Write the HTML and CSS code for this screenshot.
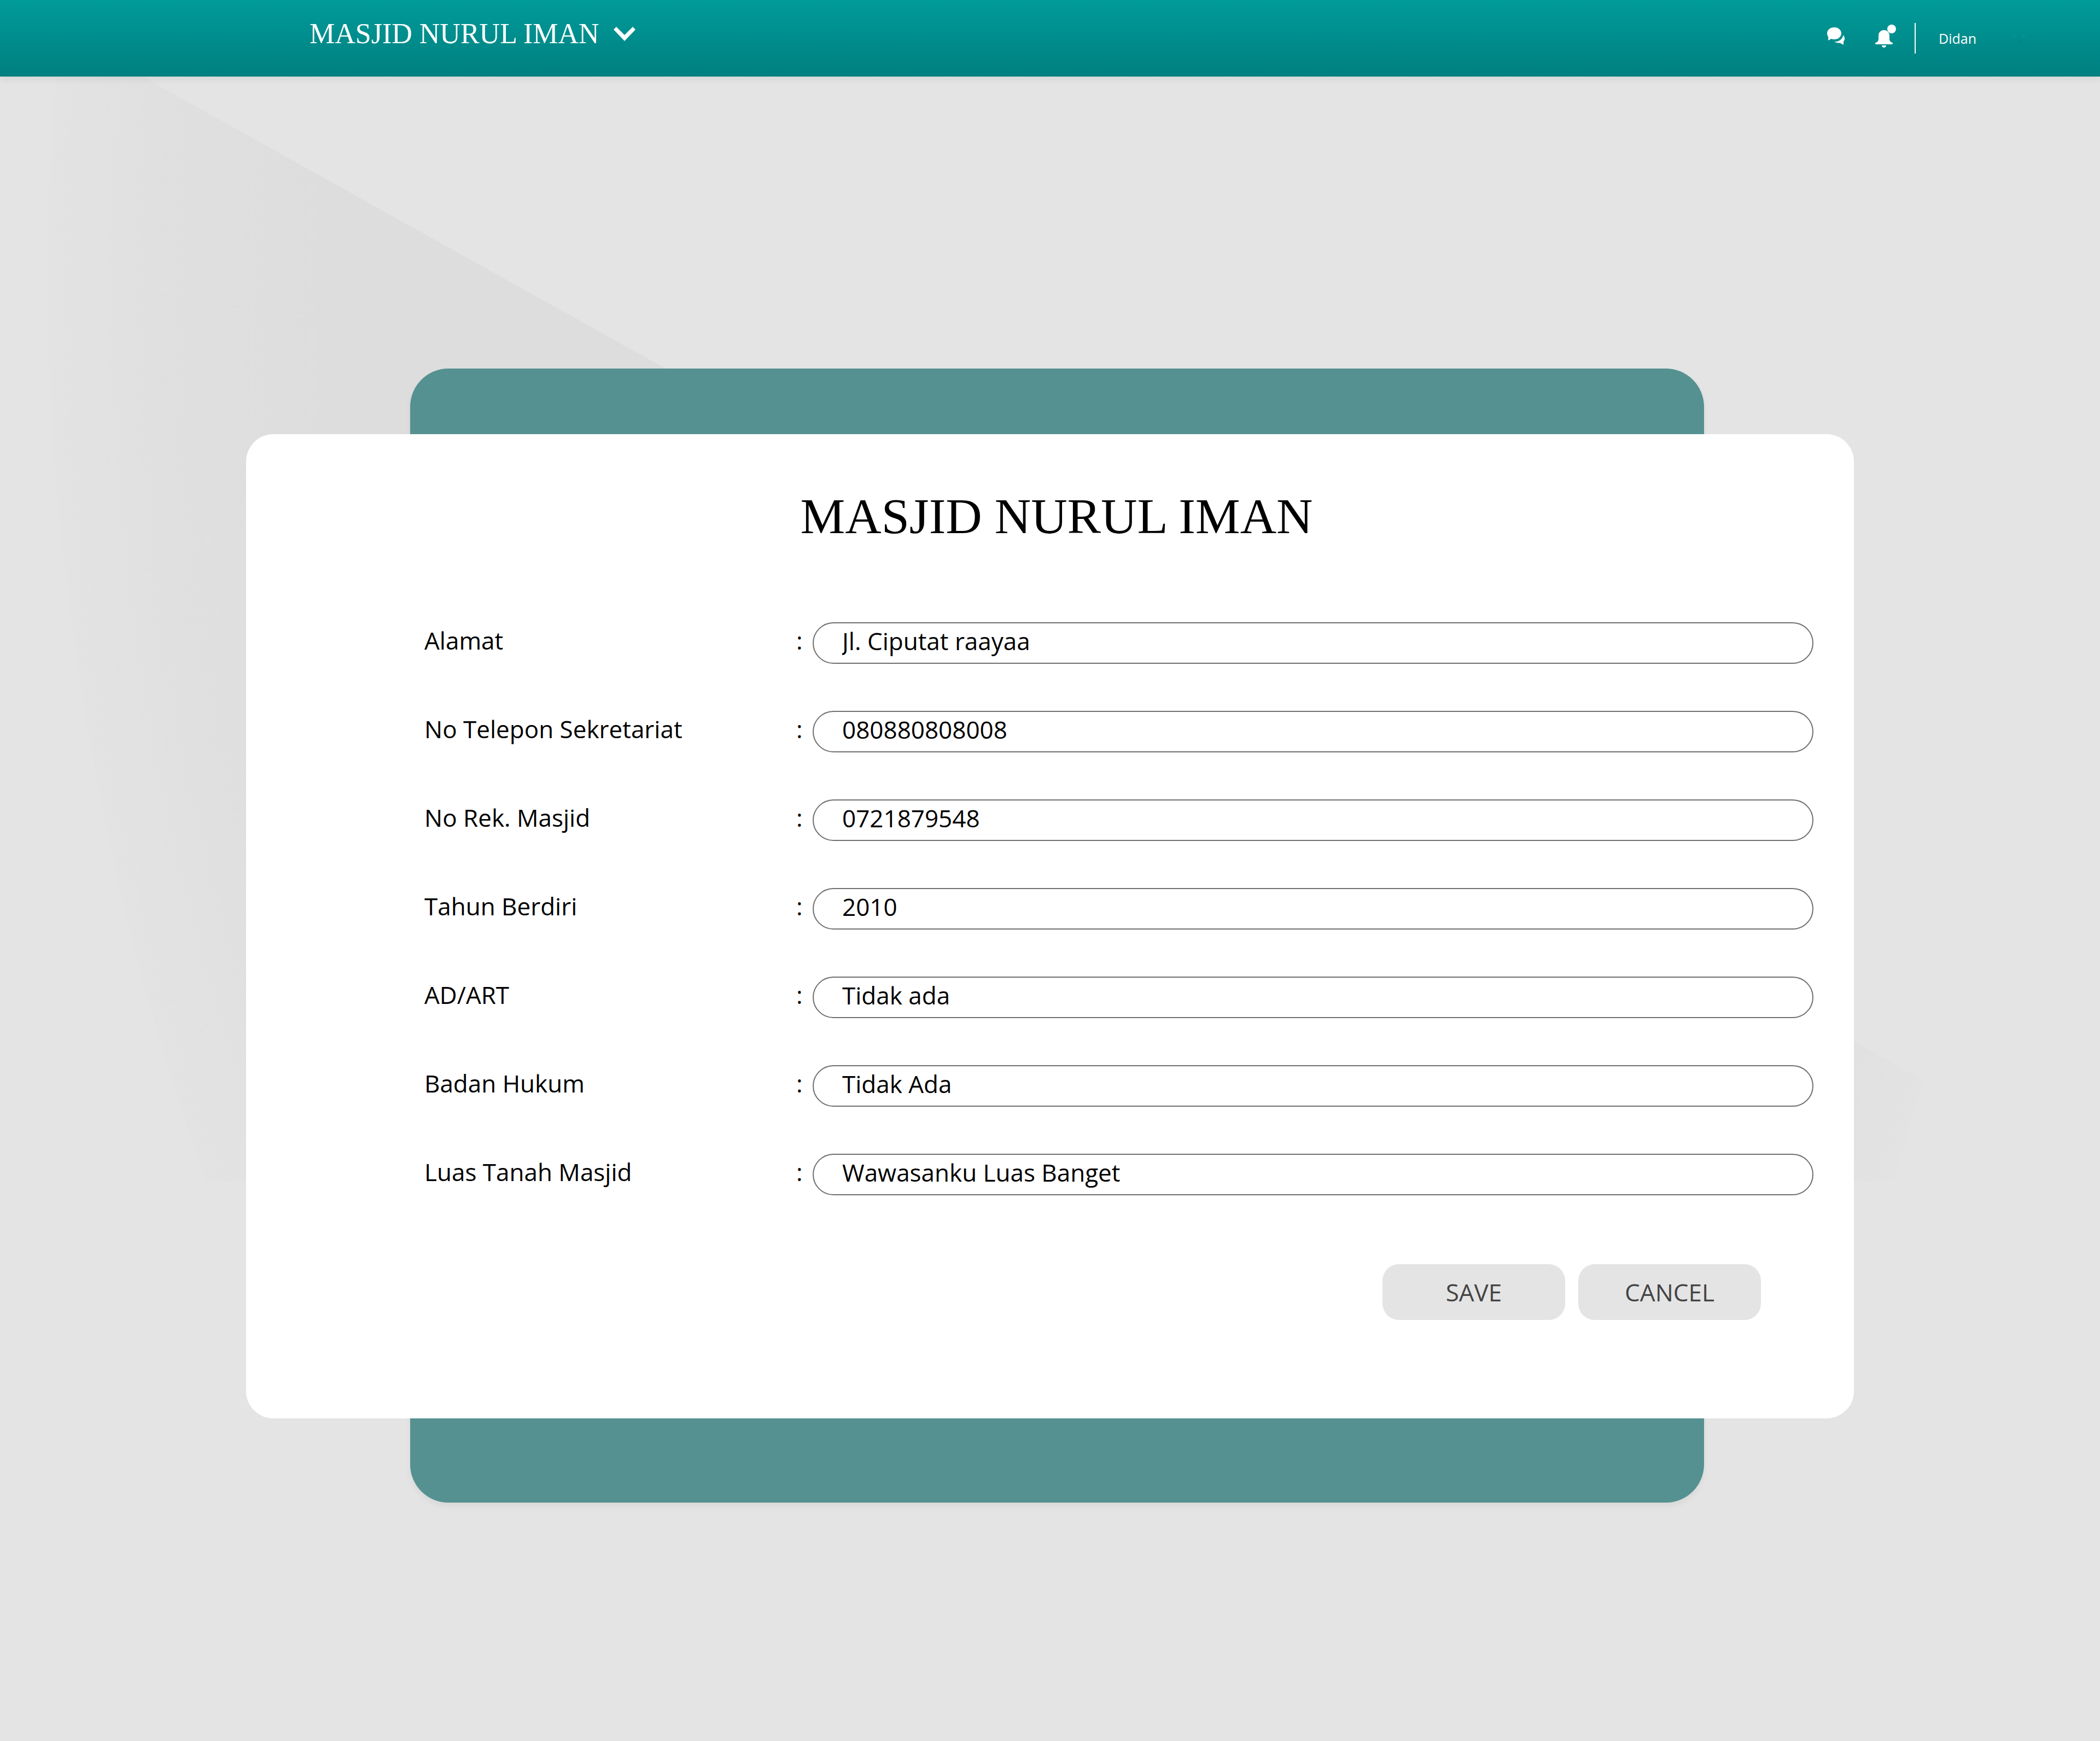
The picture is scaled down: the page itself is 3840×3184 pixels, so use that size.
FILE: index.html
```html
<!DOCTYPE html>
<html lang="id">
<head>
  <meta charset="utf-8">
  <meta name="viewport" content="width=device-width, initial-scale=1">
  <title>Masjid Nurul Iman</title>
  <link rel="stylesheet" href="styles.css">
</head>
<body>
  <svg class="backdrop-art" viewBox="0 0 3840 2160" aria-hidden="true">
    <defs>
      <radialGradient id="shade" gradientUnits="userSpaceOnUse" cx="0" cy="0" r="1" gradientTransform="translate(1918 500) scale(1831 3085)">
        <stop offset="0" stop-color="#dddddd"/>
        <stop offset="0.72" stop-color="#dddddd"/>
        <stop offset="0.9" stop-color="#e0e0e0"/>
        <stop offset="1" stop-color="#e3e3e3"/>
      </radialGradient>
    </defs>
    <path fill="url(#shade)" d="M112 57 L1215 673 L3518 1977 L3462 2160 H375 C190 1640 87 1060 87 500 C87 350 95 200 112 57Z"/>
  </svg>

  <header class="topbar">
    <button class="brand" type="button">
      <span>MASJID NURUL IMAN</span>
      <svg class="brand-chevron" viewBox="0 0 40 26" aria-hidden="true"><path d="M0 5 5 0 20 15 35 0 40 5 20 26Z"/></svg>
    </button>
    <nav class="tools" aria-label="Akun">
      <button class="tool" type="button" aria-label="Pesan">
        <svg class="chat-icon" viewBox="0 0 32 32" aria-hidden="true">
          <path d="M13 0C20.200 0 26 4.800 26 11S20.200 22 13 22C11 22 9.200 21.600 7.600 21L2 24 2.200 17.600C.8 15.800 0 13.500 0 11 0 4.800 5.800 0 13 0Z"/>
          <path d="M29.500 14C31 16 32 18 32 20.500 32 22.500 31.300 24.300 30 26V32L23.500 28.500C19.500 28.500 16 28 13 26.500 21 26.500 28.500 22 29.500 14Z"/>
        </svg>
      </button>
      <button class="tool" type="button" aria-label="Notifikasi">
        <svg class="bell-icon" viewBox="0 0 38 42" aria-hidden="true">
          <path d="M16 10C22 10 26 14.500 26 20V26C26 29 27 31 29 32 31 32.500 32 33 32 34.500S31.500 36 30 36H2C.5 36 0 35.800 0 34.500S1 32.500 3 32C5 31 6 29 6 26V20C6 14.500 10 10 16 10Z"/>
          <path d="M12 38H20C20 40.500 18 42 16 42S12 40.500 12 38Z"/>
          <circle cx="30" cy="8" r="8"/>
        </svg>
      </button>
      <a class="user" href="#">
        <span>Didan</span>
        <svg class="user-chevron" viewBox="0 0 40 26" aria-hidden="true">
          <defs>
            <linearGradient id="fade" x1="0" y1="0" x2="0" y2="1">
              <stop offset="0" stop-color="#009b98"/>
              <stop offset="1" stop-color="#00807f"/>
            </linearGradient>
          </defs>
          <path fill="url(#fade)" d="M0 5 5 0 20 15 35 0 40 5 20 26Z"/>
        </svg>
      </a>
    </nav>
  </header>

  <main class="stage">
    <div class="panel"></div>
    <form class="card">
      <h1 class="title">MASJID NURUL IMAN</h1>
      <div class="fields">
        <div class="field"><label for="alamat">Alamat</label><span>:</span><input id="alamat" type="text" value="Jl. Ciputat raayaa"></div>
        <div class="field"><label for="telepon">No Telepon Sekretariat</label><span>:</span><input id="telepon" type="text" value="080880808008"></div>
        <div class="field"><label for="rekening">No Rek. Masjid</label><span>:</span><input id="rekening" type="text" value="0721879548"></div>
        <div class="field"><label for="tahun">Tahun Berdiri</label><span>:</span><input id="tahun" type="text" value="2010"></div>
        <div class="field"><label for="adart">AD/ART</label><span>:</span><input id="adart" type="text" value="Tidak ada"></div>
        <div class="field"><label for="hukum">Badan Hukum</label><span>:</span><input id="hukum" type="text" value="Tidak Ada"></div>
        <div class="field"><label for="luas">Luas Tanah Masjid</label><span>:</span><input id="luas" type="text" value="Wawasanku Luas Banget"></div>
      </div>
      <div class="actions">
        <button class="action" type="submit">SAVE</button>
        <button class="action" type="button">CANCEL</button>
      </div>
    </form>
  </main>
</body>
</html>
```
FILE: styles.css
```css
* {
  box-sizing: border-box;
}

body {
  margin: 0;
  min-height: 100vh;
  position: relative;
  background: #e4e4e4;
  color: #000;
  font-family: "Open Sans", "Noto Sans", sans-serif;
  font-size: 44px;
  line-height: 66px;
}

button,
input {
  font: inherit;
  color: inherit;
}

button {
  border: 0;
  background: none;
  padding: 0;
  cursor: pointer;
}

/* Faint shape behind the page content */
.backdrop-art {
  position: absolute;
  top: 0;
  left: 0;
  z-index: -1;
  width: 100%;
  height: auto;
}

.topbar {
  display: flex;
  justify-content: space-between;
  height: 140px;
  padding: 0 136px 0 566px;
  background: linear-gradient(#009b9a, #007f7f);
  box-shadow: 0 6px 12px rgba(0, 0, 0, 0.06);
  color: #fff;
}

.topbar svg {
  display: block;
  fill: currentColor;
}

.brand {
  display: flex;
  align-items: center;
  gap: 26px;
  padding-bottom: 16px;
  font-family: "Liberation Serif", serif;
  font-size: 52px;
}

.brand-chevron {
  width: 40px;
  height: 26px;
}

.tools {
  display: flex;
  align-items: center;
}

.tool {
  margin-bottom: 8px;
}

.chat-icon {
  width: 32px;
  height: 32px;
  margin-right: 56px;
}

.bell-icon {
  width: 38px;
  height: 42px;
  margin-right: 34px;
}

.user {
  display: flex;
  align-items: center;
  gap: 66px;
  padding-left: 42px;
  border-left: 2px solid #fff;
  color: inherit;
  font-size: 25px;
  line-height: 56px;
  text-decoration: none;
}

.user-chevron {
  width: 24px;
  height: 16px;
}

/* The card and the panel behind it share one grid cell */
.stage {
  display: grid;
  padding: 534px 450px 120px;
}

.panel,
.card {
  grid-area: 1 / 1;
}

.panel {
  margin: 0 274px 0 300px;
  border-radius: 70px;
  background: #559190;
  box-shadow: 0 6px 12px rgba(0, 0, 0, 0.05);
}

.card {
  margin: 120px 0 154px;
  padding: 96px 74px 180px 326px;
  border-radius: 50px;
  background: #fff;
}

.title {
  margin: 0 228px 140px 0;
  font-family: "Liberation Serif", serif;
  font-size: 92px;
  font-weight: 400;
  line-height: 108px;
  text-align: center;
}

.fields {
  display: grid;
  gap: 86px;
}

.field {
  display: grid;
  grid-template-columns: 680px 30px 1fr;
}

.field input {
  width: 100%;
  height: 76px;
  padding: 0 52px 8px;
  border: 2px solid #707070;
  border-radius: 38px;
  background: #fff;
}

.actions {
  display: flex;
  justify-content: flex-end;
  gap: 24px;
  margin: 126px 96px 0 0;
}

.action {
  width: 334px;
  height: 102px;
  border-radius: 30px;
  background: #e4e4e4;
  color: #444;
}
```
